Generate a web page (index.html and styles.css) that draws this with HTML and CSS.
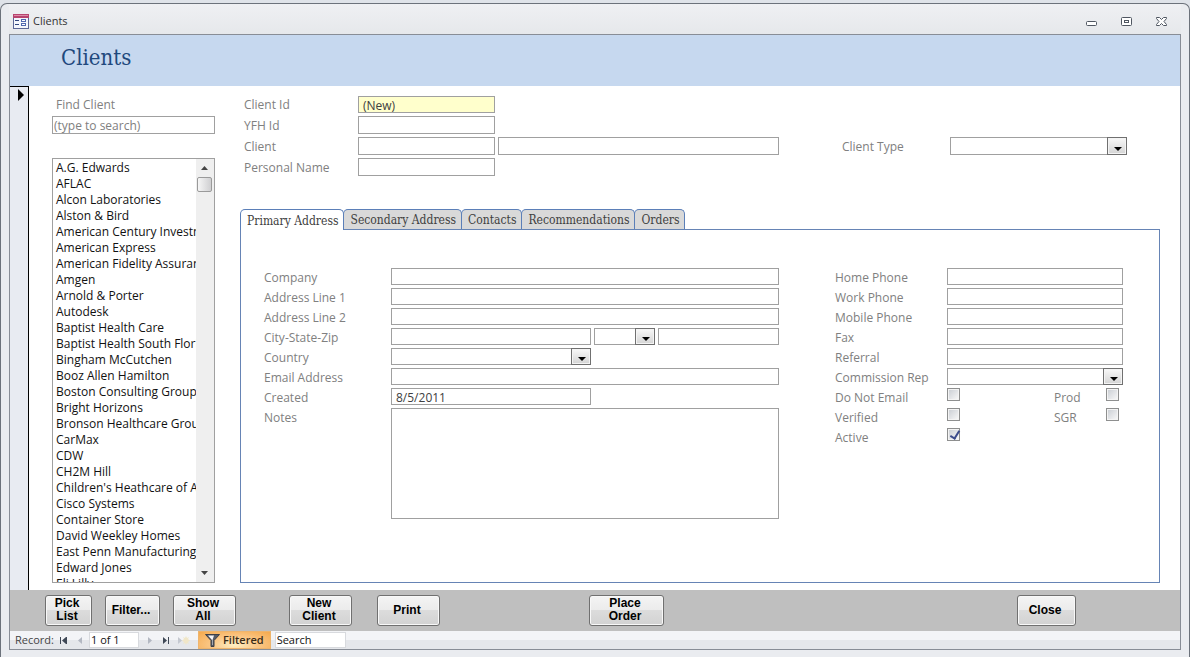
FILE: index.html
```html
<!DOCTYPE html>
<html lang="en">
<head>
<meta charset="utf-8">
<meta name="viewport" content="width=device-width, initial-scale=1">
<title>Clients</title>
<link rel="stylesheet" href="styles.css">
</head>
<body>
<div class="window">
  <header class="titlebar">
    <svg class="app-icon" width="16" height="15" viewBox="0 0 16 15" aria-hidden="true">
      <rect x="0.5" y="0.5" width="15" height="14" fill="#f4f6fc" stroke="#5c6796"/>
      <rect width="16" height="4" fill="#b8446e"/>
      <rect x="1" y="1" width="14" height="1" fill="#dc8ca8"/>
      <path d="M2 6.500h4M2 10.500h4" stroke="#33477f"/>
      <rect x="8.500" y="5.500" width="4" height="2" fill="#fff" stroke="#5068b0"/>
      <rect x="8.500" y="9.500" width="4" height="2" fill="#fff" stroke="#5068b0"/>
    </svg>
    <span class="titlebar-text">Clients</span>
    <div class="window-controls">
      <button class="window-button" type="button" aria-label="Minimize">
        <svg width="13" height="11" viewBox="0 0 13 11"><rect x="1.500" y="5.500" width="10" height="4" rx="1" fill="#fff" stroke="#4f5661"/></svg>
      </button>
      <button class="window-button" type="button" aria-label="Restore">
        <svg width="13" height="11" viewBox="0 0 13 11"><rect x="1.500" y="1.500" width="10" height="8" rx="1" fill="#fff" stroke="#4f5661"/><rect x="4.500" y="4.500" width="4" height="2" fill="#fff" stroke="#4f5661"/></svg>
      </button>
      <button class="window-button" type="button" aria-label="Close window">
        <svg width="13" height="11" viewBox="0 0 13 11"><path d="M1.500 1.500h3l2 2 2-2h3v1L9 5.500l2.500 3v1h-3l-2-2-2 2h-3v-1L4 5.500l-2.500-3z" fill="#fff" stroke="#4f5661"/></svg>
      </button>
    </div>
  </header>

  <div class="frame">
    <div class="form-header"><h1 class="form-title">Clients</h1></div>

    <main class="form-body">
      <div class="record-selector">
        <svg width="6" height="12" viewBox="0 0 6 12" aria-hidden="true"><path d="M0 0l6 6-6 6z" fill="#000"/></svg>
      </div>

      <aside class="finder">
        <label class="finder-label" for="find">Find Client</label>
        <input class="field find-field" id="find" type="text" placeholder="(type to search)">
        <div class="listbox">
          <select class="client-list" size="26" aria-label="Clients">
            <option>A.G. Edwards</option>
            <option>AFLAC</option>
            <option>Alcon Laboratories</option>
            <option>Alston &amp; Bird</option>
            <option>American Century Investments</option>
            <option>American Express</option>
            <option>American Fidelity Assurance</option>
            <option>Amgen</option>
            <option>Arnold &amp; Porter</option>
            <option>Autodesk</option>
            <option>Baptist Health Care</option>
            <option>Baptist Health South Florida</option>
            <option>Bingham McCutchen</option>
            <option>Booz Allen Hamilton</option>
            <option>Boston Consulting Group</option>
            <option>Bright Horizons</option>
            <option>Bronson Healthcare Group</option>
            <option>CarMax</option>
            <option>CDW</option>
            <option>CH2M Hill</option>
            <option>Children's Heathcare of Atlanta</option>
            <option>Cisco Systems</option>
            <option>Container Store</option>
            <option>David Weekley Homes</option>
            <option>East Penn Manufacturing</option>
            <option>Edward Jones</option>
            <option>Eli Lilly</option>
          </select>
          <div class="scrollbar" aria-hidden="true">
            <svg class="scroll-arrow" width="7" height="4" viewBox="0 0 7 4"><path d="M0 4l3.500-4L7 4z" fill="#444"/></svg>
            <div class="scroll-thumb"></div>
            <svg class="scroll-arrow scroll-down" width="7" height="4" viewBox="0 0 7 4"><path d="M0 0l3.500 4L7 0z" fill="#444"/></svg>
          </div>
        </div>
      </aside>

      <section class="details">
        <div class="summary">
          <div class="summary-main">
            <label class="label" for="client-id">Client Id</label>
            <input class="field new-record" id="client-id" type="text" value="(New)" readonly>
            <label class="label row-start" for="yfh-id">YFH Id</label>
            <input class="field" id="yfh-id" type="text">
            <label class="label row-start" for="client">Client</label>
            <input class="field" id="client" type="text">
            <input class="field" type="text" aria-label="Client name">
            <label class="label row-start" for="personal">Personal Name</label>
            <input class="field" id="personal" type="text">
          </div>
          <div class="summary-type">
            <label class="label" for="client-type">Client Type</label>
            <div class="combo"><select class="field" id="client-type"><option></option></select></div>
          </div>
        </div>

        <div class="tabs" role="tablist">
          <button class="tab tab-active" type="button" role="tab" aria-selected="true">Primary Address</button>
          <button class="tab" type="button" role="tab" aria-selected="false">Secondary Address</button>
          <button class="tab" type="button" role="tab" aria-selected="false">Contacts</button>
          <button class="tab" type="button" role="tab" aria-selected="false">Recommendations</button>
          <button class="tab" type="button" role="tab" aria-selected="false">Orders</button>
        </div>
        <div class="tab-panel" role="tabpanel">
          <div class="address">
            <label class="label" for="company">Company</label>
            <input class="field" id="company" type="text">
            <label class="label" for="line1">Address Line 1</label>
            <input class="field" id="line1" type="text">
            <label class="label" for="line2">Address Line 2</label>
            <input class="field" id="line2" type="text">
            <label class="label" for="city">City-State-Zip</label>
            <div class="split">
              <input class="field" id="city" type="text">
              <div class="combo"><select class="field" aria-label="State"><option></option></select></div>
              <input class="field" type="text" aria-label="Zip">
            </div>
            <label class="label" for="country">Country</label>
            <div class="split"><div class="combo"><select class="field" id="country"><option></option></select></div></div>
            <label class="label" for="email">Email Address</label>
            <input class="field" id="email" type="text">
            <label class="label" for="created">Created</label>
            <div class="split"><input class="field" id="created" type="text" value="8/5/2011"></div>
            <label class="label" for="notes">Notes</label>
            <textarea class="field notes" id="notes"></textarea>
          </div>
          <div class="contact">
            <label class="label" for="home">Home Phone</label>
            <input class="field" id="home" type="text">
            <label class="label" for="work">Work Phone</label>
            <input class="field" id="work" type="text">
            <label class="label" for="mobile">Mobile Phone</label>
            <input class="field" id="mobile" type="text">
            <label class="label" for="fax">Fax</label>
            <input class="field" id="fax" type="text">
            <label class="label" for="referral">Referral</label>
            <input class="field" id="referral" type="text">
            <label class="label" for="rep">Commission Rep</label>
            <div class="combo"><select class="field" id="rep"><option></option></select></div>
            <label class="label" for="no-email">Do Not Email</label>
            <div class="checks">
              <input class="check" id="no-email" type="checkbox">
              <label class="label" for="prod">Prod</label>
              <input class="check" id="prod" type="checkbox">
            </div>
            <label class="label" for="verified">Verified</label>
            <div class="checks">
              <input class="check" id="verified" type="checkbox">
              <label class="label" for="sgr">SGR</label>
              <input class="check" id="sgr" type="checkbox">
            </div>
            <label class="label" for="active">Active</label>
            <div class="checks"><input class="check" id="active" type="checkbox" checked></div>
          </div>
        </div>
      </section>
    </main>

    <div class="actions">
      <div class="action-group">
        <button class="action action-pick" type="button">Pick<br>List</button>
        <button class="action action-filter" type="button">Filter...</button>
        <button class="action" type="button">Show<br>All</button>
      </div>
      <div class="action-group record-actions">
        <button class="action" type="button">New<br>Client</button>
        <button class="action" type="button">Print</button>
      </div>
      <button class="action action-order" type="button">Place<br>Order</button>
      <button class="action action-close" type="button">Close</button>
    </div>

    <nav class="record-nav" aria-label="Record navigation">
      <label class="record-label" for="record">Record:</label>
      <button class="nav-button" type="button" aria-label="First record"><svg width="8" height="7" viewBox="0 0 8 7"><path d="M0 0h1v7H0zM6 0v7L2 3.500zM6 0h1v7H6z" fill="#3f4856"/></svg></button>
      <button class="nav-button" type="button" aria-label="Previous record"><svg width="8" height="7" viewBox="0 0 8 7"><path d="M6 0v7L2 3.500z" fill="#b3b8c2"/></svg></button>
      <input class="nav-field record-field" id="record" type="text" value="1 of 1">
      <button class="nav-button" type="button" aria-label="Next record"><svg width="8" height="7" viewBox="0 0 8 7"><path d="M2 0v7l4-3.500z" fill="#b3b8c2"/></svg></button>
      <button class="nav-button" type="button" aria-label="Last record"><svg width="8" height="7" viewBox="0 0 8 7"><path d="M1 0l4 3.500L1 7zM6 0h1v7H6z" fill="#3f4856"/></svg></button>
      <button class="nav-button nav-new" type="button" aria-label="New record"><svg width="14" height="9" viewBox="0 0 14 9"><path d="M1 1v7l4-3.500z" fill="#c4c8d0"/><path d="M9 0l1 2 2-1-1 2 2 1.500-2 1.500 1 2-2-1-1 2-1-2-2 1 1-2-2-1.500L7 3 6 1l2 1z" fill="#f0e6c8"/></svg></button>
      <button class="filtered" type="button">
        <svg width="15" height="13" viewBox="0 0 15 13" aria-hidden="true"><path d="M0.500 0.500h14L9 6.500v6H6v-6z" fill="#565b66" stroke="#3d4048"/><path d="M3 1.500h6L7.500 6v5H7V6z" fill="#f4f4f6"/></svg>
        Filtered
      </button>
      <input class="nav-field search-field" type="text" value="Search" aria-label="Search">
    </nav>
  </div>
</div>
</body>
</html>
```
FILE: styles.css
```css
* { box-sizing: border-box; }

body {
  margin: 0;
  min-height: 100vh;
  display: flex;
  flex-direction: column;
  padding-top: 3px;
  background: #dfe3e9;
  color: #111;
  font: 12px/16px "Open Sans", "Noto Sans", sans-serif;
}

button, input, select, textarea { font: inherit; color: inherit; margin: 0; }

.window {
  flex: 1;
  display: flex;
  flex-direction: column;
  border: 1px solid #6c727b;
  border-bottom: 0;
  border-radius: 7px 7px 0 0;
  padding: 0 8px 7px;
  background: #eaecf0;
}

.titlebar {
  display: flex;
  align-items: center;
  height: 30px;
  padding: 4px 13px 0 4px;
  background: linear-gradient(#eff0f3, #e6e8eb);
}
.titlebar-text { margin-left: 4px; color: #333; font-size: 11px; }
.window-controls { display: flex; gap: 22px; margin-left: auto; }
.window-button { display: block; padding: 0; border: 0; background: none; line-height: 0; }

.frame {
  flex: 1;
  display: flex;
  flex-direction: column;
  border: 1px solid #888d96;
  background: #fff;
}

.form-header { height: 51px; padding: 8px 51px; background: #c6d8ef; }
.form-title {
  margin: 0;
  color: #1f497d;
  font: 22px/30px "DejaVu Serif Condensed", "DejaVu Serif", serif;
}

.form-body { flex: 1; display: flex; padding-right: 20px; }

.record-selector {
  width: 19px;
  padding: 2px 0 0 8px;
  border-top: 1px solid #000;
  border-right: 1px solid #000;
  background: #e8ebf2;
  line-height: 0;
}

.label, .finder-label { color: #808080; white-space: nowrap; }
.label { line-height: 19px; }

.field {
  display: block;
  width: 100%;
  min-width: 0;
  height: 17px;
  padding: 1px 4px 0;
  border: 1px solid #a0a0a0;
  border-radius: 0;
  outline: 0;
  background: #fff;
  color: #404040;
}

.finder { display: flex; flex-direction: column; width: 163px; margin: 11px 0 7px 23px; }
.finder-label { padding-left: 4px; }
.find-field { height: 18px; margin: 3px 0 24px; padding: 0 1px; line-height: 15px; }
.find-field::placeholder { color: #808080; opacity: 1; }
.listbox { flex: 1; display: flex; border: 1px solid #a0a0a0; }
.client-list {
  flex: 1;
  width: 0;
  height: 0;
  min-height: 100%;
  padding: 0;
  border: 0;
  border-radius: 0;
  outline: 0;
  overflow: hidden;
  scrollbar-width: none;
  background: #fff;
}
.client-list option { height: 16px; min-height: 16px; padding: 0 3px; line-height: 15px; overflow: hidden; }
.scrollbar { display: flex; flex-direction: column; align-items: center; width: 18px; padding: 7px 2px 7px 1px; background: #efefef; }
.scroll-arrow { flex: none; }
.scroll-thumb {
  width: 15px;
  height: 15px;
  margin-top: 7px;
  border: 1px solid #9a9a9a;
  border-radius: 2px;
  background: linear-gradient(90deg, #f6f6f6, #cfcfd1);
}
.scroll-down { margin-top: auto; }

.details { flex: 1; min-width: 0; display: flex; flex-direction: column; margin: 9px 0 7px 25px; }

.summary { display: flex; gap: 63px; padding: 0 33px 0 4px; }
.summary-main {
  flex: 1;
  display: grid;
  grid-template-columns: 114px 137px 1fr;
  grid-auto-rows: 18px;
  row-gap: 3px;
}
.summary-main .label, .summary-type .label { line-height: 20px; }
.summary-main .field { height: 18px; }
.summary-main .field + .field { width: auto; margin-left: 3px; }
.row-start { grid-column: 1; }
.summary-main .new-record { height: 17px; align-self: end; background: #ffffcc; }
.summary-type { display: grid; grid-template-columns: 108px 177px; align-items: start; padding-top: 42px; }
.summary-type .field { height: 18px; }

.combo { position: relative; min-width: 0; }
.combo select { appearance: none; }
.combo::before {
  content: "";
  position: absolute;
  top: 0;
  right: 0;
  bottom: 0;
  width: 18px;
  border: 1px solid #707070;
  background: linear-gradient(#f8f8f8, #d4d4d4);
  box-shadow: inset 0 0 0 1px #f4f4f4;
  pointer-events: none;
}
.combo::after {
  content: "";
  position: absolute;
  right: 5px;
  bottom: 4px;
  border: 4px solid transparent;
  border-top-color: #000;
  border-bottom: 0;
  pointer-events: none;
}

.tabs { display: flex; align-items: flex-end; margin-top: 34px; }
.tab {
  position: relative;
  height: 20px;
  margin-right: -1px;
  padding: 2px 5px 0 6px;
  border: 1px solid #5b7fb8;
  border-bottom: 0;
  border-radius: 5px 5px 0 0;
  background: #d9d9d9;
  color: #404040;
  font: 12px/17px "DejaVu Serif Condensed", "DejaVu Serif", serif;
  white-space: nowrap;
}
.tabs .tab { margin-top: -1px; }
.tab-active { z-index: 1; height: 21px; margin-bottom: -1px; background: #fff; }

.tab-panel {
  flex: 1;
  display: flex;
  gap: 56px;
  padding: 38px 36px 0 23px;
  border: 1px solid #6684b5;
}
.address, .contact { display: grid; grid-auto-rows: 17px; row-gap: 3px; align-content: start; }
.address { flex: 1; grid-template-columns: 127px 1fr; }
.contact { grid-template-columns: 112px 176px; }
.split { display: grid; grid-template-columns: 200fr 61fr 121fr; gap: 3px; }
.notes { height: 111px; resize: none; }

.checks { display: grid; grid-template-columns: 107px 52px 13px; }
.check {
  appearance: none;
  width: 13px;
  height: 13px;
  margin: 0;
  border: 1px solid #8e8f8f;
  background: linear-gradient(135deg, #c8ccd2, #fafafa);
  box-shadow: inset 0 0 0 1px #f4f4f4;
}
.check:checked::after {
  content: "";
  display: block;
  width: 4px;
  height: 8px;
  margin: 0 0 0 4px;
  border: solid #3c4c8c;
  border-width: 0 2px 2px 0;
  transform: rotate(32deg);
}

.actions { display: flex; height: 41px; padding: 5px 104px 0 35px; background: #bfbfbf; }
.action-group { display: flex; gap: 13px; }
.record-actions { gap: 25px; margin-left: 53px; }
.action {
  width: 63px;
  height: 31px;
  padding: 0 3px 1px 0;
  border: 1px solid #707070;
  border-radius: 3px;
  background: linear-gradient(#f4f4f4, #ebebeb 50%, #dcdcdc 50%, #d2d2d2);
  box-shadow: inset 0 0 0 1px #f8f8f8;
  color: #000;
  font: bold 12px/13px "Liberation Sans", Arial, sans-serif;
}
.action-pick { width: 47px; }
.action-filter { width: 55px; }
.action-order { width: 75px; margin-left: 149px; }
.action-close { width: 59px; margin-left: auto; }

.record-nav {
  display: flex;
  align-items: center;
  height: 18px;
  padding-left: 5px;
  background: linear-gradient(#f3f4f7 50%, #e5e7eb 50%);
  font-size: 11px;
}
.record-label { width: 41px; color: #444; }
.nav-button { width: 16px; padding: 0; border: 0; background: none; line-height: 0; }
.nav-new { width: 20px; }
.nav-field { height: 16px; padding: 0 1px; border: 1px solid #d8dade; background: #fff; outline: 0; }
.record-field { width: 50px; margin: 0 3px 0 1px; }
.filtered {
  display: flex;
  align-items: center;
  gap: 3px;
  height: 18px;
  margin-left: 4px;
  padding: 0 6px;
  border: 1px solid #eeb46c;
  background: radial-gradient(ellipse at 50% 80%, #fff0c4, #fbc888 45%, #f5a94c);
  color: #3a2c18;
  font-weight: 600;
}
.search-field { width: 71px; margin-left: 4px; }
```
